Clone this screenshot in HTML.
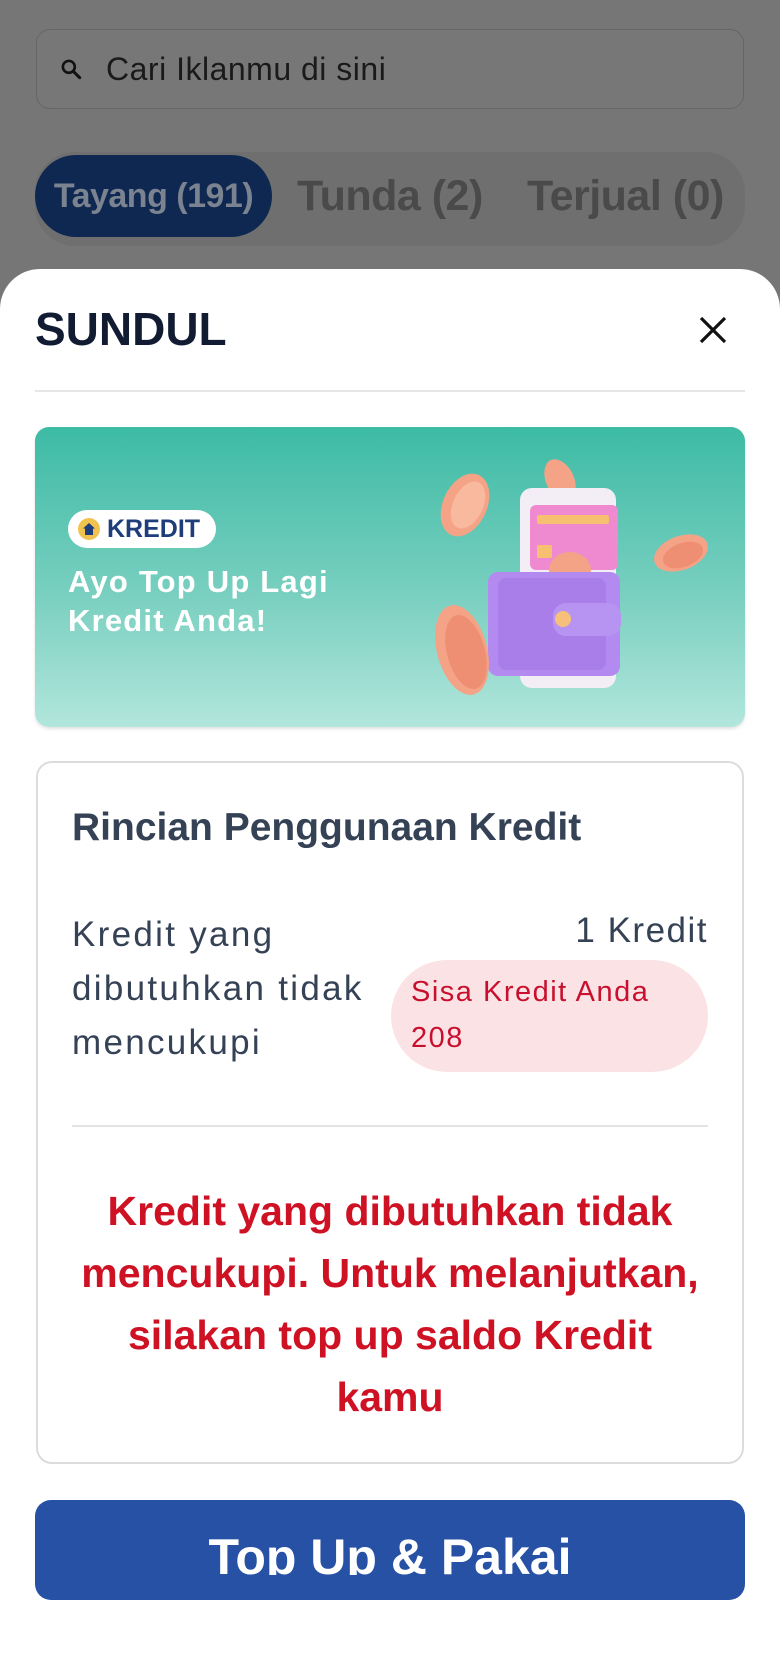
<!DOCTYPE html>
<html><head><meta charset="utf-8">
<style>
*{margin:0;padding:0;box-sizing:border-box}
body{width:780px;height:1600px;overflow:hidden;background:#767676;font-family:"Liberation Sans",sans-serif;position:relative}
.abs{position:absolute}
</style></head><body>
<!-- background -->
<div class="abs" style="left:36px;top:29px;width:708px;height:80px;border:1.5px solid #666;border-radius:14px;background:#777"></div>
<svg class="abs" style="left:58px;top:56px" width="26" height="26" viewBox="0 0 24 24"><circle cx="10" cy="10" r="5.5" fill="none" stroke="#111" stroke-width="2.4"/><path d="M14 14l6 6" stroke="#111" stroke-width="2.8" stroke-linecap="round"/></svg>
<div class="abs" style="left:106px;top:50px;font-size:32px;color:#1a1a1a;line-height:38px;letter-spacing:0.5px">Cari Iklanmu di sini</div>
<div class="abs" style="left:35px;top:152px;width:710px;height:94px;border-radius:40px;background:#6f6f6f"></div>
<div class="abs" style="left:35px;top:155px;width:237px;height:82px;border-radius:41px;background:#0f2851"></div>
<div class="abs" style="left:35px;top:175px;width:237px;text-align:center;font-size:34px;font-weight:bold;color:#7b8290;line-height:42px;letter-spacing:-0.5px">Tayang (191)</div>
<div class="abs" style="left:297px;top:172px;font-size:43px;font-weight:bold;color:#4a4a4a;line-height:48px;letter-spacing:-0.5px">Tunda (2)</div>
<div class="abs" style="left:527px;top:172px;font-size:43px;font-weight:bold;color:#4a4a4a;line-height:48px;letter-spacing:-0.5px">Terjual (0)</div>

<!-- sheet -->
<div class="abs" style="left:0;top:269px;width:780px;height:1400px;background:#fff;border-radius:40px 40px 0 0"></div>
<div class="abs" style="left:35px;top:302px;font-size:46px;font-weight:bold;color:#111c33;line-height:54px">SUNDUL</div>
<svg class="abs" style="left:698px;top:315px" width="30" height="30" viewBox="0 0 30 30"><path d="M3 3L27 27M27 3L3 27" stroke="#111" stroke-width="3.2"/></svg>
<div class="abs" style="left:35px;top:390px;width:710px;height:2px;background:#e6e6e6"></div>

<!-- banner -->
<div class="abs" style="left:35px;top:427px;width:710px;height:300px;border-radius:14px;background:linear-gradient(180deg,#3dbba5 0%,#78cfbf 55%,#b2e6dc 100%);box-shadow:0 2px 3px rgba(0,0,0,0.12);overflow:hidden">
  <div class="abs" style="left:33px;top:83px;width:148px;height:38px;border-radius:19px;background:#fff"></div>
  <div class="abs" style="left:43px;top:91px;width:22px;height:22px;border-radius:11px;background:#f2c24f"></div>
  <svg class="abs" style="left:47px;top:95px" width="14" height="14" viewBox="0 0 14 14"><path d="M7 1L1 6.5h2V13h8V6.5h2z" fill="#1f3d7a"/></svg>
  <div class="abs" style="left:72px;top:87px;font-size:25px;font-weight:bold;color:#1f3d7a;line-height:30px">KREDIT</div>
  <div class="abs" style="left:33px;top:135px;font-size:31px;font-weight:bold;color:#fff;line-height:39px;letter-spacing:1.2px">Ayo Top Up Lagi<br>Kredit Anda!</div>
  <svg class="abs" style="left:350px;top:23px" width="360" height="270" viewBox="385 450 360 270">
    <ellipse cx="465" cy="505" rx="22" ry="33" transform="rotate(25 465 505)" fill="#f4a387"/>
    <ellipse cx="468" cy="505" rx="15" ry="25" transform="rotate(25 468 505)" fill="#f8b99e"/>
    <ellipse cx="560" cy="480" rx="14" ry="22" transform="rotate(-25 560 480)" fill="#f4a387"/>
    <rect x="520" y="488" width="96" height="200" rx="12" fill="#f3eef6"/>
    <rect x="530" y="505" width="88" height="65" rx="6" fill="#f08ad0"/>
    <rect x="537" y="515" width="72" height="9" rx="2" fill="#f6c070"/>
    <rect x="537" y="545" width="15" height="13" rx="2" fill="#f6c070"/>
    <ellipse cx="570" cy="570" rx="21" ry="18" fill="#f4a387"/>
    <rect x="488" y="572" width="132" height="104" rx="10" fill="#b38af0"/>
    <rect x="498" y="578" width="108" height="92" rx="8" fill="#a97ee8"/>
    <rect x="553" y="603" width="68" height="33" rx="13" fill="#b894f2"/>
    <circle cx="563" cy="619" r="8" fill="#f6c07a"/>
    <ellipse cx="681" cy="553" rx="28" ry="17" transform="rotate(-20 681 553)" fill="#f4a387"/>
    <ellipse cx="683" cy="555" rx="21" ry="12" transform="rotate(-20 683 555)" fill="#ee8f73"/>
    <ellipse cx="462" cy="650" rx="25" ry="46" transform="rotate(-15 462 650)" fill="#f4a387"/>
    <ellipse cx="466" cy="652" rx="19" ry="38" transform="rotate(-15 466 652)" fill="#ee8f73"/>
  </svg>
</div>

<!-- card -->
<div class="abs" style="left:36px;top:761px;width:708px;height:703px;border:2px solid #dcdcdc;border-radius:16px"></div>
<div class="abs" style="left:72px;top:806px;font-size:39px;font-weight:bold;color:#354256;line-height:44px">Rincian Penggunaan Kredit</div>
<div class="abs" style="left:72px;top:908px;font-size:35px;color:#354256;line-height:54px;letter-spacing:2.3px">Kredit yang<br>dibutuhkan tidak<br>mencukupi</div>
<div class="abs" style="left:450px;top:911px;width:258px;text-align:right;font-size:35px;color:#354256;line-height:40px;letter-spacing:1.5px">1 Kredit</div>
<div class="abs" style="left:391px;top:960px;width:317px;height:112px;border-radius:56px;background:#fbe3e5"></div>
<div class="abs" style="left:411px;top:969px;font-size:29px;color:#c8102e;line-height:46px;letter-spacing:1.5px">Sisa Kredit Anda<br>208</div>
<div class="abs" style="left:72px;top:1125px;width:636px;height:1.5px;background:#e4e4e4"></div>
<div class="abs" style="left:20px;top:1180px;width:740px;text-align:center;font-size:41px;font-weight:bold;color:#cf1124;line-height:62px">Kredit yang dibutuhkan tidak<br>mencukupi. Untuk melanjutkan,<br>silakan top up saldo Kredit<br>kamu</div>

<!-- button -->
<div class="abs" style="left:35px;top:1500px;width:710px;height:100px;border-radius:16px;background:#2751a5"></div>
<div class="abs" style="left:35px;top:1500px;width:710px;height:75px;overflow:hidden">
  <div style="position:absolute;left:0;top:29px;width:710px;text-align:center;font-size:50px;font-weight:bold;color:#fff;line-height:56px">Top Up &amp; Pakai</div>
</div>
</body></html>
